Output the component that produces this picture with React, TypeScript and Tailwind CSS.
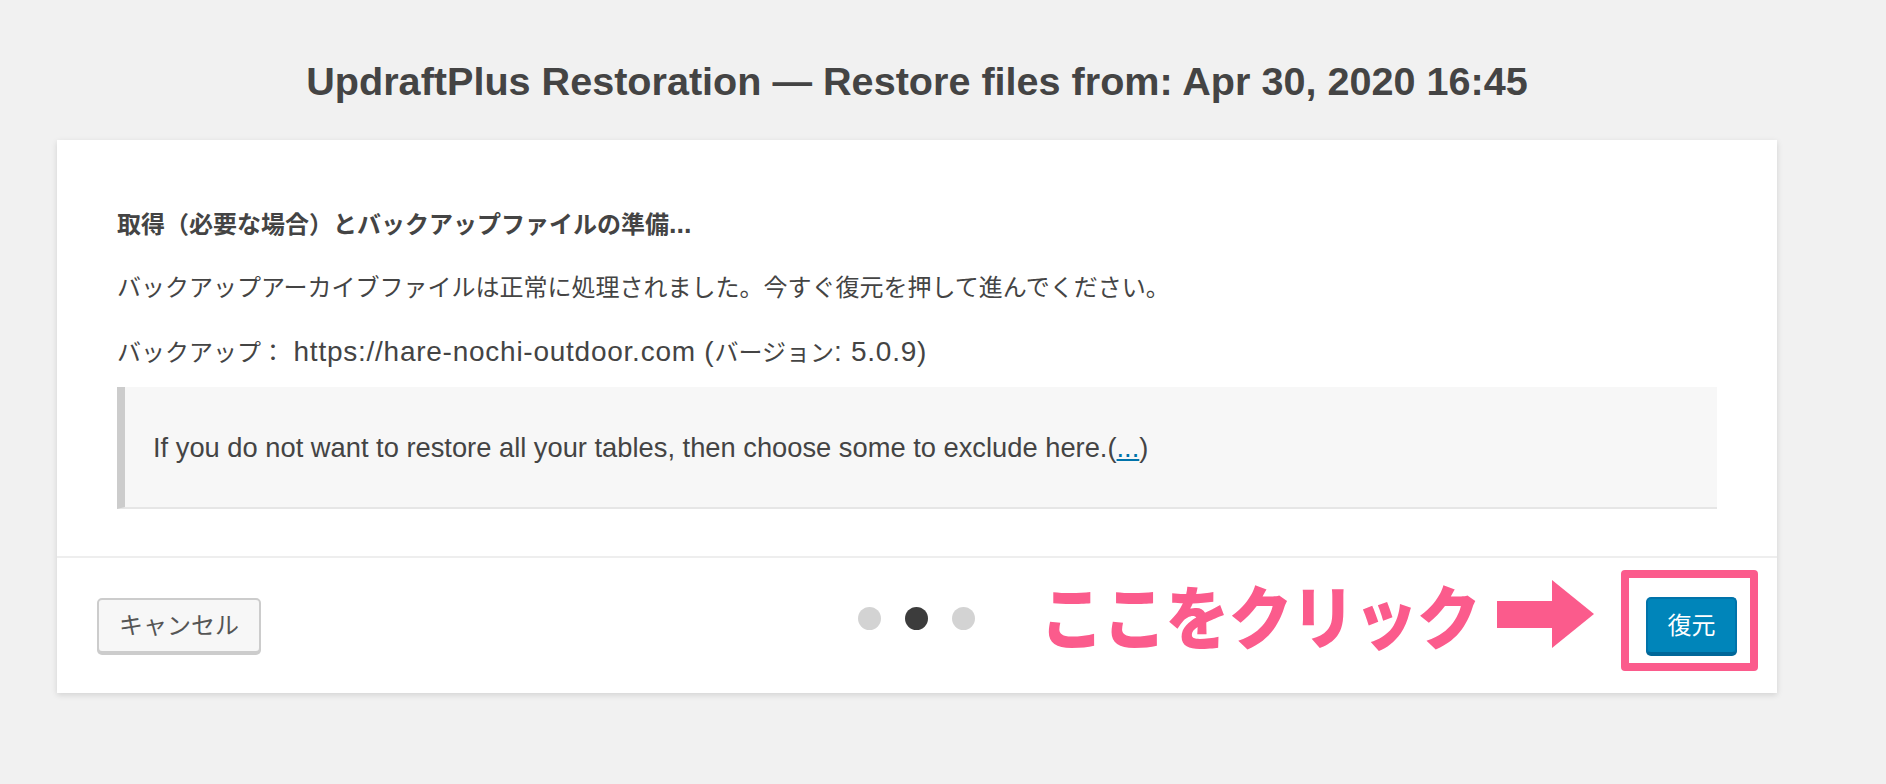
export default function App() {
  return (
    <div className="min-h-screen bg-[#f1f1f1] font-['Liberation_Sans','Noto_Sans_CJK_JP',sans-serif] text-[#444]">
      <div className="ml-[57px] w-[1720px] pt-[57px]">
        {/* Title */}
        <h1 className="text-center text-[39.6px] font-bold leading-[48px] text-[#444]">
          UpdraftPlus Restoration — Restore files from: Apr 30, 2020 16:45
        </h1>

        {/* Card */}
        <div className="mt-[35px] bg-white shadow-[0_2px_6px_rgba(0,0,0,0.13)]">
          <div className="px-[60px] pt-[68px] pb-[47px] text-[27px] leading-[33px]">
            <p className="font-bold">
              <span className="text-[24px]">取得（必要な場合）とバックアップファイルの準備</span>...
            </p>
            <p className="mt-[30px]">
              <span className="text-[24px]">
                バックアップアーカイブファイルは正常に処理されました。今すぐ復元を押して進んでください。
              </span>
            </p>
            <p className="mt-[31px] text-[28px] tracking-[0.75px]">
              <span className="text-[24px] tracking-normal">バックアップ：</span> https://hare-nochi-outdoor.com (
              <span className="text-[24px] tracking-normal">バージョン</span>: 5.0.9)
            </p>

            {/* Notice */}
            <div className="mt-[18px] flex h-[122px] items-center border-b-2 border-l-[8px] border-b-[#e6e6e6] border-l-[#cccccc] bg-[#f7f7f7] pl-[28px]">
              <p className="text-[27.3px]">
                If you do not want to restore all your tables, then choose some to exclude here.(
                <a href="#" className="text-[#0073aa] underline">...</a>)
              </p>
            </div>
          </div>

          {/* Footer */}
          <div className="relative grid h-[137px] grid-cols-3 items-center border-t-2 border-[#eeeeee] px-[40px]">
            <div>
              <button className="h-[55px] rounded-[5px] border-2 border-[#cccccc] bg-[#f7f7f7] px-[20px] text-[24px] leading-none text-[#555] shadow-[0_2px_0_#cccccc]">
                キャンセル
              </button>
            </div>

            <div className="mb-[14px] flex justify-center gap-[24px]">
              <span className="h-[23px] w-[23px] rounded-full bg-[#d3d3d3]" />
              <span className="h-[23px] w-[23px] rounded-full bg-[#3c3c3c]" />
              <span className="h-[23px] w-[23px] rounded-full bg-[#d3d3d3]" />
            </div>

            <div className="flex justify-end">
              <div className="relative">
                <button className="h-[57px] w-[91px] rounded-[5px] border-2 border-[#0073aa] border-b-[#006799] bg-[#0085ba] text-[24px] leading-none text-white shadow-[0_2px_0_#006799]">
                  復元
                </button>
                {/* annotation frame */}
                <div className="pointer-events-none absolute -top-[27px] -right-[21px] -bottom-[17px] -left-[25px] rounded-[4px] border-[8px] border-[#fb5b8c]" />
              </div>
            </div>

            {/* annotation */}
            <div className="pointer-events-none absolute top-[23px] left-[983px] flex h-[66px] items-center gap-[17px]">
              <span className="origin-center scale-y-108 text-[64px] font-black leading-none tracking-[-1.2px] text-[#fb5b8c] font-['Noto_Sans_CJK_JP',sans-serif]">
                ここをクリック
              </span>
              <svg width="97" height="68" viewBox="0 0 97 68" className="text-[#fb5b8c]">
                <rect x="0" y="21" width="58" height="27" fill="currentColor" />
                <polygon points="55,0 97,34 55,68" fill="currentColor" />
              </svg>
            </div>
          </div>
        </div>
      </div>
    </div>
  );
}
